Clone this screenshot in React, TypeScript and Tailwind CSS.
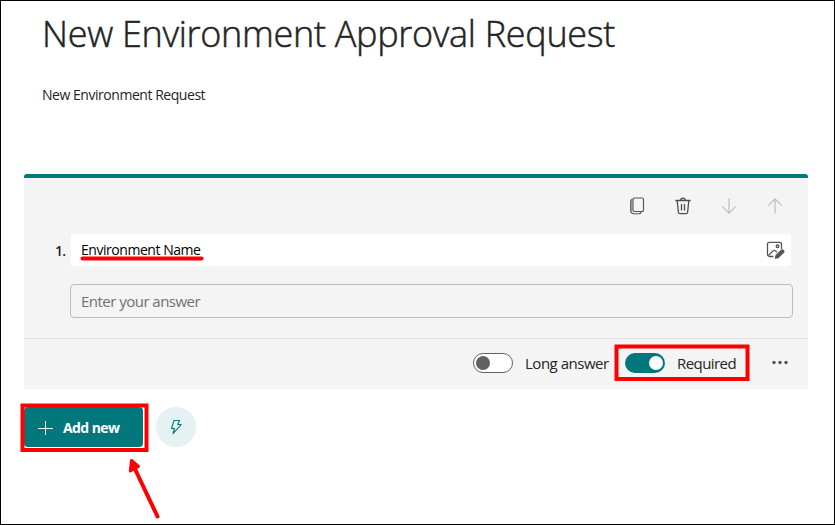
import React from "react";

const textFont = "font-['Open_Sans','Noto_Sans',sans-serif]";

function CopyIcon() {
  return (
    <svg width="20" height="20" viewBox="0 0 20 20" fill="none" stroke="#555" strokeWidth="1.15">
      <rect x="6" y="2" width="10.500" height="13.500" rx="1.600" />
      <path d="M5.500 3C4.200 3.500 3.700 4.300 3.700 5.500V14.500c0 2 1.200 3.200 3.200 3.200h5c1.200 0 2-.6 2.400-1.500" />
      <path d="M4.700 4V15.500" strokeOpacity=".5" />
    </svg>
  );
}

function TrashIcon() {
  return (
    <svg width="20" height="20" viewBox="0 0 20 20" fill="none" stroke="#4d4d4d" strokeWidth="1.3" strokeLinecap="round">
      <path d="M2.900 4.500h14.200M7.800 4.300a2.200 2.200 0 0 1 4.400 0M4.200 4.700l1.200 11.500c.1 1 .8 1.500 1.700 1.500h5.800c.9 0 1.600-.5 1.700-1.500l1.200-11.500M8.500 8.500v5.500M11.500 8.500v5.500" />
    </svg>
  );
}

function ArrowIcon({ up = false }: { up?: boolean }) {
  return (
    <svg className={up ? "rotate-180" : ""} width="20" height="20" viewBox="0 0 20 20" fill="none" stroke="#bdbdbd" strokeWidth="1.2" strokeLinecap="round">
      <path d="M10 2.700v14.400M3.700 10.800l6.300 6.400 6.300-6.400" />
    </svg>
  );
}

function PictureIcon() {
  return (
    <svg width="20" height="20" viewBox="0 0 20 20" fill="none" stroke="#555" strokeWidth="1.3">
      <path d="M8.500 16.500H4.500A2 2 0 0 1 2.500 14.500V4A1.700 1.700 0 0 1 4.200 2.300h10.600A1.700 1.700 0 0 1 16.500 4v5" />
      <circle cx="12.500" cy="6.300" r="1.300" />
      <path d="M3.500 15.500l4.400-4.600c.8-.8 1.700-.8 2.500 0l1.500 1.500" />
      <path d="M10.500 18l.6-2.500 5.300-5.300a1.500 1.500 0 0 1 2.100 2.100l-5.300 5.200z" fill="#555" strokeLinejoin="round" />
    </svg>
  );
}

function Toggle({ on = false }: { on?: boolean }) {
  return (
    <span className={on
      ? "flex h-5 w-10 shrink-0 items-center justify-end rounded-full bg-[#03787c] pr-[2px]"
      : "flex h-5 w-10 shrink-0 items-center rounded-full border border-[#616161] bg-white pl-[2px]"}>
      <span className={on ? "size-[14px] rounded-full bg-white" : "size-[14px] rounded-full bg-[#616161]"} />
    </span>
  );
}

export default function App() {
  return (
    <main className={`relative h-[525px] w-[835px] overflow-hidden border border-black bg-white pl-[23px] text-[#242424] ${textFont}`}>
      <header className="h-[173px] pl-[18px] pt-[9px]">
        <h1 className="whitespace-nowrap text-[36px] font-light leading-[48px] tracking-[-0.3px] [-webkit-text-stroke:0.5px_#242424]">New Environment Approval Request</h1>
        <p className="mt-[27px] whitespace-nowrap text-[14px] leading-5 tracking-[-0.46px]">New Environment Request</p>
      </header>

      <section className="flex h-[215px] w-[784px] flex-col rounded-[3px] bg-[#f4f4f4]">
        <div className="h-1 shrink-0 rounded-t-[3px] bg-[#03787c]" />
        <div className="flex h-14 shrink-0 items-center justify-end gap-[26px] pr-[23px]">
          <CopyIcon />
          <TrashIcon />
          <ArrowIcon />
          <ArrowIcon up />
        </div>
        <div className="flex h-8 shrink-0 items-center pl-[31px]">
          <span className="w-4 pt-px text-[14px] font-semibold tracking-[-0.8px]">1.</span>
          <div className="flex h-8 w-[720px] items-center justify-between rounded-[3px] bg-white pl-[10px] pr-[6px]">
            <span className="whitespace-nowrap text-[14px] leading-5 tracking-[-0.46px] text-black">Environment Name</span>
            <PictureIcon />
          </div>
        </div>
        <div className="ml-[46px] mt-[18px] flex h-[34px] w-[723px] shrink-0 items-center rounded-[4px] border border-[#bdbdbd] pl-[10px]">
          <span className="whitespace-nowrap text-[15px] tracking-[-0.52px] text-[#707070]">Enter your answer</span>
        </div>
        <footer className="mt-5 flex h-[51px] items-center border-t border-[#e0e0e0] pb-[2px] pl-[449px]">
          <Toggle />
          <span className="ml-3 w-[100px] whitespace-nowrap text-[15px] tracking-[-0.48px]">Long answer</span>
          <Toggle on />
          <span className="ml-3 w-[95px] whitespace-nowrap text-[15px] tracking-[-0.57px]">Required</span>
          <svg className="mb-[2px]" width="16" height="5" viewBox="0 0 16 5" fill="#555">
            <circle cx="2" cy="2.500" r="1.700" />
            <circle cx="8" cy="2.500" r="1.700" />
            <circle cx="14" cy="2.500" r="1.700" />
          </svg>
        </footer>
      </section>

      <div className="mt-[18px] flex items-center gap-[13px]">
        <button className="flex h-10 w-[119px] items-center rounded-[4px] bg-[#03787c] pl-[13px] text-white">
          <svg width="16" height="16" viewBox="0 0 16 16" stroke="white" strokeWidth="1">
            <path d="M1 9.500h15M8.500 2v14" />
          </svg>
          <span className="ml-[10px] whitespace-nowrap pt-px text-[14px] font-bold tracking-[-0.58px]">Add new</span>
        </button>
        <button className="flex size-10 items-center justify-center rounded-full bg-[#e6f1f3]">
          <svg width="16" height="18" viewBox="0 0 16 18" fill="none" stroke="#03787c" strokeWidth="1.100" strokeLinejoin="round">
            <path d="M6 2.500h5.500L9.800 6.500h3.500L5 15.700l1.500-5.200H3.500z" />
          </svg>
        </button>
      </div>

      <svg className="pointer-events-none absolute -left-px -top-px" width="835" height="525" viewBox="0 0 835 525" fill="none" stroke="#fe0000" strokeWidth="4">
        <path d="M82.500 258.500H201.500" strokeWidth="4" strokeLinecap="round" />
        <rect x="616.500" y="346.500" width="131" height="32.500" />
        <rect x="22.500" y="405.500" width="124" height="44.500" />
        <path d="M157.500 516.500L134 467" strokeLinecap="round" />
        <path d="M131.500 460.500l-1.200 10.500 8.200-4.500z" fill="#fe0000" strokeWidth="3" strokeLinejoin="round" />
      </svg>
    </main>
  );
}
